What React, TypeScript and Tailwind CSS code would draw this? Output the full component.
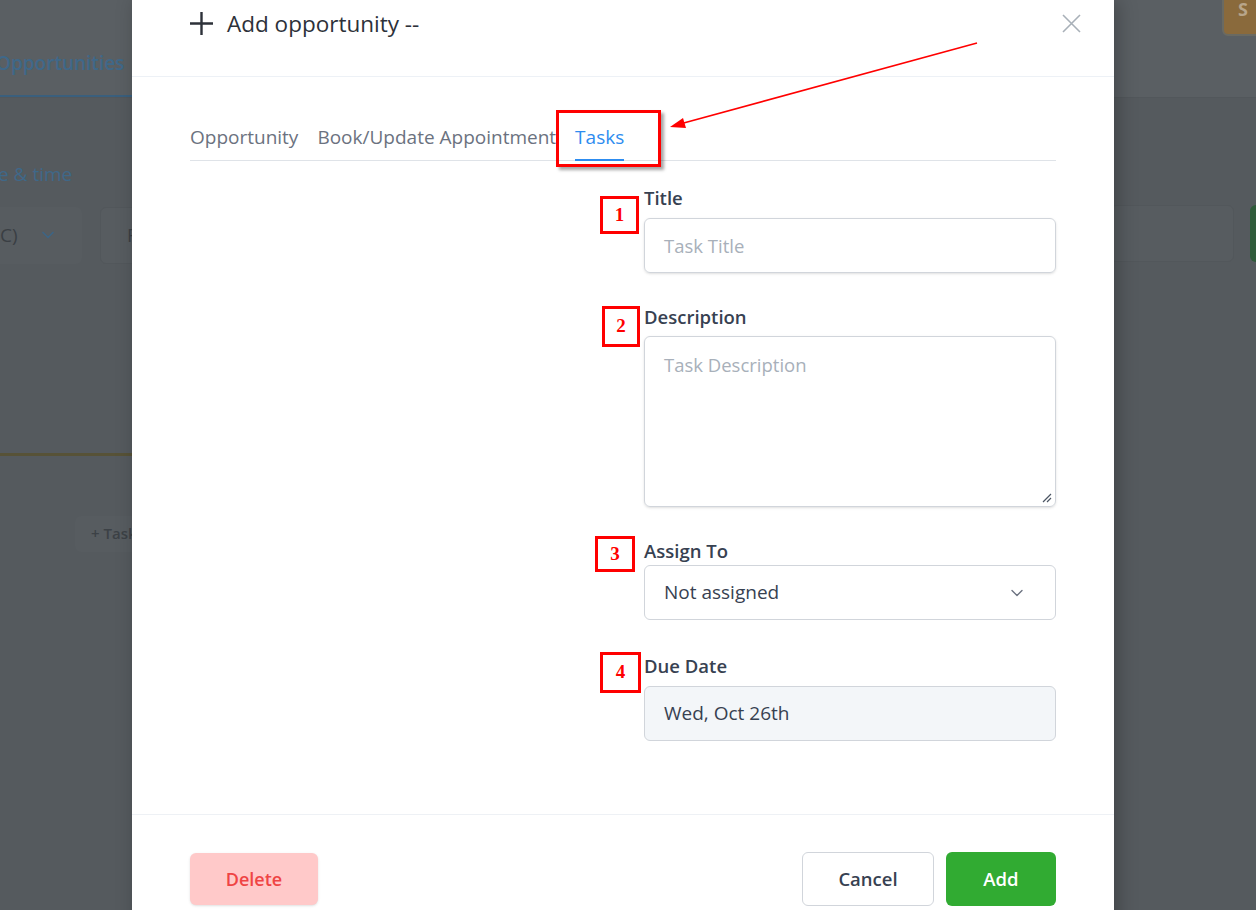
import { ChevronDown } from 'lucide-react';

const font = { fontFamily: '"Open Sans", "Noto Sans", sans-serif' };

function Marker({ n, className }: { n: string; className: string }) {
  return (
    <div
      className={`absolute flex items-center justify-center border-[3px] border-[#ff0000] bg-white text-[19px] font-bold text-[#ff0000] ${className}`}
      style={{ fontFamily: '"Liberation Serif", serif' }}
    >
      {n}
    </div>
  );
}

function Field({ label, gap, children }: { label: string; gap: string; children: React.ReactNode }) {
  return (
    <div className="flex flex-col">
      <label className={`text-[18.5px] font-semibold leading-[22px] text-[#374151] ${gap}`}>{label}</label>
      {children}
    </div>
  );
}

export default function App() {
  return (
    <div className="relative h-[910px] w-[1256px] overflow-hidden bg-[#555a5e]" style={font}>
      {/* Dimmed page behind the modal */}
      <div className="flex h-[98px] items-end border-b border-[#52575b] bg-[#5a5f63]">
        <div className="w-[132px] border-b-2 border-[#3a5f7d] pb-[18px]">
          <span className="-ml-[4px] whitespace-nowrap text-[19px] font-semibold text-[#3f6889]">Opportunities</span>
        </div>
      </div>
      <div className="pt-[62px] text-[19px] text-[#3f6889]">
        <span className="-ml-[2px] whitespace-nowrap">e &amp; time</span>
      </div>
      <div className="mt-[18px] flex gap-[18px]">
        <div className="flex h-[57px] w-[82px] items-center justify-between rounded-r-md bg-[#575c60] pr-[24px] text-[19px] text-[#3a3f44]">
          <span>C)</span>
          <ChevronDown className="h-5 w-5 text-[#3d6585]" strokeWidth={2} />
        </div>
        <div className="flex h-[57px] w-[40px] items-center rounded-l-md border border-[#52575b] bg-[#575c60] pl-[26px] text-[19px] text-[#3a3f44]">
          F
        </div>
      </div>
      <div className="mt-[189px] h-[3px] w-[132px] bg-[#575237]" />
      <div className="mt-[60px] flex">
        <div className="ml-[75px] flex h-[36px] w-[100px] items-center whitespace-nowrap rounded-md bg-[#575c60] pl-[16px] text-[15px] font-semibold text-[#3c4146]">
          + Task
        </div>
      </div>

      {/* right edge remnants */}
      <div className="absolute -top-[6px] right-[-20px] flex h-[42px] w-[54px] items-start whitespace-nowrap rounded-md border-2 border-[#6a6a62] bg-[#8a6a3c] pl-[14px] text-[18px] font-bold text-[#b8a58a]">
        S
      </div>
      <div className="absolute left-[1110px] top-[205px] h-[57px] w-[124px] rounded-md border border-[#52575b] bg-[#575c60]" />
      <div className="absolute left-[1250px] top-[205px] h-[57px] w-[20px] rounded-md bg-[#2f5a3a]" />

      {/* Modal */}
      <div className="absolute left-[132px] top-0 flex h-[940px] w-[982px] flex-col bg-white shadow-[4px_0_18px_rgba(0,0,0,0.25)]">
        <div className="flex h-[77px] items-start justify-between border-b border-[#edf1f6] pl-[58px] pr-[33px] pt-[7px]">
          <div className="flex items-center gap-[14px]">
            <svg width="23" height="23" viewBox="0 0 23 23">
              <path d="M11.5 0 V23 M0 11.5 H23" stroke="#2d3139" strokeWidth="2.4" />
            </svg>
            <span className="text-[22.5px] text-[#2d3139]">Add opportunity --</span>
          </div>
          <svg className="mt-[7px]" width="19" height="19" viewBox="0 0 19 19">
            <path d="M1 1 L18 18 M18 1 L1 18" stroke="#a8b0b8" strokeWidth="1.6" />
          </svg>
        </div>

        <div className="px-[58px]">
          <div className="mt-[48px] flex gap-[19px] border-b border-[#dfe3e8] text-[19px] leading-[24px]">
            <div className="pb-[11px] text-[#6b7280]">Opportunity</div>
            <div className="pb-[11px] text-[#6b7280]">Book/Update Appointment</div>
            <div className="-mb-px border-b-2 border-[#2d8cf0] pb-[10px] text-[#2d8cf0]">Tasks</div>
          </div>

          <div className="ml-auto flex w-[412px] flex-col pb-[73px] pt-[26px]">
            <Field label="Title" gap="mb-[9px]">
              <div className="flex h-[55px] items-center rounded-md border border-[#d1d5db] px-[19px] text-[18.5px] text-[#a8b0ba] shadow-sm">
                Task Title
              </div>
            </Field>
            <div className="h-[33px]" />
            <Field label="Description" gap="mb-[8px]">
              <div className="relative h-[171px] rounded-md border border-[#d1d5db] px-[19px] pt-[14px] text-[18.5px] text-[#a8b0ba] shadow-sm">
                Task Description
                <svg className="absolute bottom-[3px] right-[3px]" width="12" height="12" viewBox="0 0 12 12">
                  <path d="M11 3 L3 11 M11 7 L7 11" stroke="#4b5563" strokeWidth="1.2" />
                </svg>
              </div>
            </Field>
            <div className="h-[33px]" />
            <Field label="Assign To" gap="mb-[3px]">
              <div className="flex h-[55px] items-center justify-between rounded-md border border-[#d1d5db] pl-[19px] pr-[28px] text-[19px] text-[#374151]">
                <span>Not assigned</span>
                <ChevronDown className="h-[20px] w-[20px] text-[#6b7280]" strokeWidth={1.6} />
              </div>
            </Field>
            <div className="h-[35px]" />
            <Field label="Due Date" gap="mb-[9px]">
              <div className="flex h-[55px] items-center rounded-md border border-[#d1d5db] bg-[#f3f6f9] px-[19px] text-[19px] text-[#374151]">
                Wed, Oct 26th
              </div>
            </Field>
          </div>
        </div>

        <div className="flex items-start justify-between border-t border-[#eef1f5] px-[58px] pt-[37px]">
          <button className="mt-[1px] h-[52px] w-[128px] rounded-md bg-[#ffc9c9] text-[18px] font-semibold text-[#ef4444] shadow-sm">
            Delete
          </button>
          <div className="flex gap-[12px]">
            <button className="h-[54px] w-[132px] rounded-md border border-[#d1d5db] bg-white text-[18.5px] font-semibold text-[#374151]">
              Cancel
            </button>
            <button className="h-[54px] w-[110px] rounded-md bg-[#31ab32] text-[18.5px] font-semibold text-white">
              Add
            </button>
          </div>
        </div>
      </div>

      {/* Annotations */}
      <div className="absolute left-[556px] top-[110px] h-[57px] w-[105px] border-[3px] border-[#ff0000] shadow-[3px_3px_3px_rgba(0,0,0,0.35)]" />
      <Marker n="1" className="left-[600px] top-[196px] h-[38px] w-[39px]" />
      <Marker n="2" className="left-[602px] top-[306px] h-[41px] w-[38px]" />
      <Marker n="3" className="left-[595px] top-[536px] h-[36px] w-[40px]" />
      <Marker n="4" className="left-[600px] top-[652px] h-[41px] w-[41px]" />
      <svg className="absolute left-0 top-0" width="1256" height="910">
        <line x1="977" y1="43" x2="680" y2="124" stroke="#ff0000" strokeWidth="1.6" />
        <polygon points="670,127 683,118 686,128" fill="#ff0000" />
      </svg>
    </div>
  );
}
